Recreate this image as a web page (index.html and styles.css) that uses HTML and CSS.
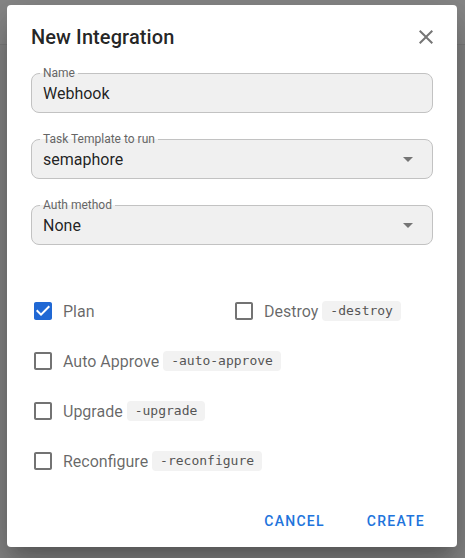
FILE: index.html
```html
<!DOCTYPE html>
<html>
<head>
<meta charset="utf-8">
<link rel="stylesheet" href="styles.css">
</head>
<body>
<div class="page">
  <div class="appbar"></div>
</div>
<div class="overlay">
  <div class="dialog">
    <div class="title-row">
      <div class="title">New Integration</div>
      <svg class="close" viewBox="0 0 24 24" width="24" height="24"><path d="M19 6.41L17.59 5 12 10.59 6.41 5 5 6.41 10.59 12 5 17.59 6.41 19 12 13.41 17.59 19 19 17.59 13.41 12z" fill="#757575"/></svg>
    </div>
    <div class="fields">
      <div class="field">
        <span class="label">Name</span>
        <span class="value">Webhook</span>
      </div>
      <div class="field">
        <span class="label">Task Template to run</span>
        <span class="value">semaphore</span>
        <svg class="arrow" viewBox="0 0 24 24" width="24" height="24"><path d="M7 10l5 5 5-5z" fill="#757575"/></svg>
      </div>
      <div class="field">
        <span class="label">Auth method</span>
        <span class="value">None</span>
        <svg class="arrow" viewBox="0 0 24 24" width="24" height="24"><path d="M7 10l5 5 5-5z" fill="#757575"/></svg>
      </div>
    </div>
    <div class="checks">
      <div class="check">
        <svg class="box" viewBox="0 0 24 24" width="24" height="24"><path d="M19 3H5c-1.11 0-2 .9-2 2v14c0 1.1.89 2 2 2h14c1.11 0 2-.9 2-2V5c0-1.1-.89-2-2-2zm-9 14l-5-5 1.41-1.41L10 14.17l7.59-7.59L19 8l-9 9z" fill="#2068d4"/></svg>
        <span class="text">Plan</span>
      </div>
      <div class="check">
        <svg class="box" viewBox="0 0 24 24" width="24" height="24"><path d="M19 5v14H5V5h14m0-2H5c-1.1 0-2 .9-2 2v14c0 1.1.9 2 2 2h14c1.1 0 2-.9 2-2V5c0-1.1-.9-2-2-2z" fill="#737373"/></svg>
        <span class="text">Destroy</span><code class="chip">-destroy</code>
      </div>
      <div class="check wide">
        <svg class="box" viewBox="0 0 24 24" width="24" height="24"><path d="M19 5v14H5V5h14m0-2H5c-1.1 0-2 .9-2 2v14c0 1.1.9 2 2 2h14c1.1 0 2-.9 2-2V5c0-1.1-.9-2-2-2z" fill="#737373"/></svg>
        <span class="text">Auto Approve</span><code class="chip">-auto-approve</code>
      </div>
      <div class="check wide">
        <svg class="box" viewBox="0 0 24 24" width="24" height="24"><path d="M19 5v14H5V5h14m0-2H5c-1.1 0-2 .9-2 2v14c0 1.1.9 2 2 2h14c1.1 0 2-.9 2-2V5c0-1.1-.9-2-2-2z" fill="#737373"/></svg>
        <span class="text">Upgrade</span><code class="chip">-upgrade</code>
      </div>
      <div class="check wide">
        <svg class="box" viewBox="0 0 24 24" width="24" height="24"><path d="M19 5v14H5V5h14m0-2H5c-1.1 0-2 .9-2 2v14c0 1.1.9 2 2 2h14c1.1 0 2-.9 2-2V5c0-1.1-.9-2-2-2z" fill="#737373"/></svg>
        <span class="text">Reconfigure</span><code class="chip">-reconfigure</code>
      </div>
    </div>
    <div class="actions">
      <button class="btn">Cancel</button>
      <button class="btn">Create</button>
    </div>
  </div>
</div>
</body>
</html>
```
FILE: styles.css
```css
* { box-sizing: border-box; }
html, body { margin: 0; padding: 0; }
body {
  width: 465px;
  height: 558px;
  background: #858585;
  font-family: Roboto, "Liberation Sans", sans-serif;
  overflow: hidden;
}
.page { height: 558px; }
.appbar {
  height: 45px;
  background: #888888;
  border-bottom: 1px solid #7c7c7c;
}
.overlay {
  position: absolute;
  top: 0;
  left: 0;
  width: 465px;
  height: 558px;
  padding: 5px 0 0 7px;
}
.dialog {
  width: 450px;
  height: 542px;
  background: #fff;
  border-radius: 4px;
  box-shadow: 0 11px 15px -7px rgba(0,0,0,.2), 0 24px 38px 3px rgba(0,0,0,.14), 0 9px 46px 8px rgba(0,0,0,.12);
  display: flex;
  flex-direction: column;
}
.title-row {
  display: flex;
  align-items: center;
  justify-content: space-between;
  padding: 16px 19px 0 24px;
  height: 48px;
}
.title {
  font-size: 20px;
  font-weight: 500;
  line-height: 32px;
  color: rgba(0,0,0,.87);
  letter-spacing: 0.1px;
}
.close { display: block; }
.fields {
  margin-top: 20px;
  padding: 0 24px;
  display: flex;
  flex-direction: column;
  gap: 26px;
}
.field {
  position: relative;
  height: 40px;
  border: 1px solid #c2c2c2;
  border-radius: 8px;
  background: #f0f0f0;
  padding: 0 12px 0 11px;
  display: flex;
  align-items: center;
  justify-content: space-between;
}
.label {
  position: absolute;
  top: -8px;
  left: 8px;
  padding: 0 3px;
  font-size: 12px;
  line-height: 14px;
  color: #666;
  background: linear-gradient(#fff 50%, #f0f0f0 50%);
}
.value {
  font-size: 16px;
  color: rgba(0,0,0,.87);
}
.arrow { display: block; margin-right: 0; }
.checks {
  margin-top: 41px;
  padding: 0 24px;
  display: grid;
  grid-template-columns: 1fr 1fr;
  grid-auto-rows: 50px;
}
.check {
  display: flex;
  align-items: center;
}
.check.wide { grid-column: 1 / span 2; }
.box { display: block; margin-right: 8px; flex: none; }
.text {
  font-size: 16px;
  color: rgba(0,0,0,.6);
}
.chip {
  margin-left: 4px;
  font-family: "DejaVu Sans Mono", "Liberation Mono", monospace;
  font-size: 13px;
  line-height: 20px;
  padding: 0 8px;
  background: #f2f2f2;
  color: #555;
  border-radius: 4px;
}
.actions {
  margin-top: 17px;
  padding: 0 16px 0 0;
  display: flex;
  justify-content: flex-end;
  gap: 10px;
}
.btn {
  height: 36px;
  padding: 0 16px;
  border: none;
  background: transparent;
  font-family: Roboto, "Liberation Sans", sans-serif;
  font-size: 14px;
  font-weight: 500;
  letter-spacing: 1.25px;
  text-transform: uppercase;
  color: #2174dc;
}
```
